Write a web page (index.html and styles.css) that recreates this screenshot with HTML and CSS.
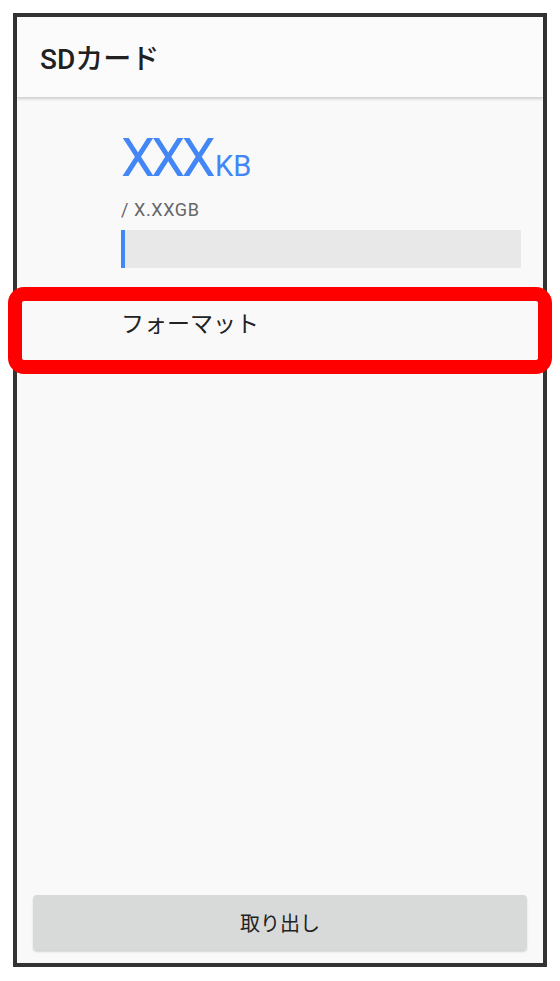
FILE: index.html
```html
<!DOCTYPE html>
<html lang="ja">
<head>
  <meta charset="UTF-8">
  <meta name="viewport" content="width=device-width, initial-scale=1.0">
  <title>SDカード</title>
  <link rel="stylesheet" href="styles.css">
</head>
<body>
  <div class="frame">
    <!-- Barra de título -->
    <div class="header">SDカード</div>

    <!-- Uso do cartão -->
    <div class="usage">
      <div class="used">XXX<span class="unit">KB</span></div>
      <div class="total">/ X.XXGB</div>
      <div class="bar"><div class="bar-fill" style="width: 4px"></div></div>
    </div>

    <!-- Item destacado -->
    <div class="row">
      フォーマット
      <div class="highlight"></div>
    </div>

    <div class="spacer"></div>

    <button class="eject">取り出し</button>
  </div>
</body>
</html>
```

FILE: styles.css
```css
body {
  margin: 0;
  background: #fff;
  font-family: Roboto, "Noto Sans CJK JP", sans-serif;
}
.frame {
  margin: 13px;
  height: 946px;
  border: 4px solid #333;
  background: #f9f9f9;
  display: flex;
  flex-direction: column;
}
.header {
  height: 80px;
  flex-shrink: 0;
  display: flex;
  align-items: center;
  padding-left: 23px;
  font-size: 28px;
  font-weight: 500;
  color: #212121;
  background: #fbfbfb;
  box-shadow: 0 2px 3px rgba(0, 0, 0, 0.18);
  position: relative;
  z-index: 1;
}
.usage {
  padding: 34px 22px 0 104px;
}
.used {
  font-size: 54px;
  line-height: 54px;
  letter-spacing: -3.5px;
  color: #4287f5;
}
.unit {
  font-size: 29px;
  letter-spacing: 0;
  margin-left: 3px;
}
.total {
  margin-top: 8px;
  font-size: 18px;
  line-height: 18px;
  letter-spacing: 0.6px;
  color: #666;
}
.bar {
  margin-top: 11px;
  height: 38px;
  background: #e8e8e8;
}
.bar-fill {
  height: 100%;
  background: #4287f5;
}
.row {
  position: relative;
  margin-top: 21px;
  height: 66px;
  display: flex;
  align-items: center;
  padding-left: 104px;
  font-size: 23px;
  color: #222;
}
.highlight {
  position: absolute;
  top: -2px;
  left: -9px;
  right: -9px;
  bottom: -19px;
  border: 14px solid #ff0000;
  border-radius: 16px;
}
.spacer {
  flex: 1;
}
.eject {
  margin: 0 16px 13px;
  height: 55px;
  border: none;
  border-radius: 4px;
  background: #d8d9d9;
  box-shadow: 0 2px 2px rgba(0, 0, 0, 0.15);
  font-family: Roboto, "Noto Sans CJK JP", sans-serif;
  font-size: 20px;
  color: #222;
}
```
